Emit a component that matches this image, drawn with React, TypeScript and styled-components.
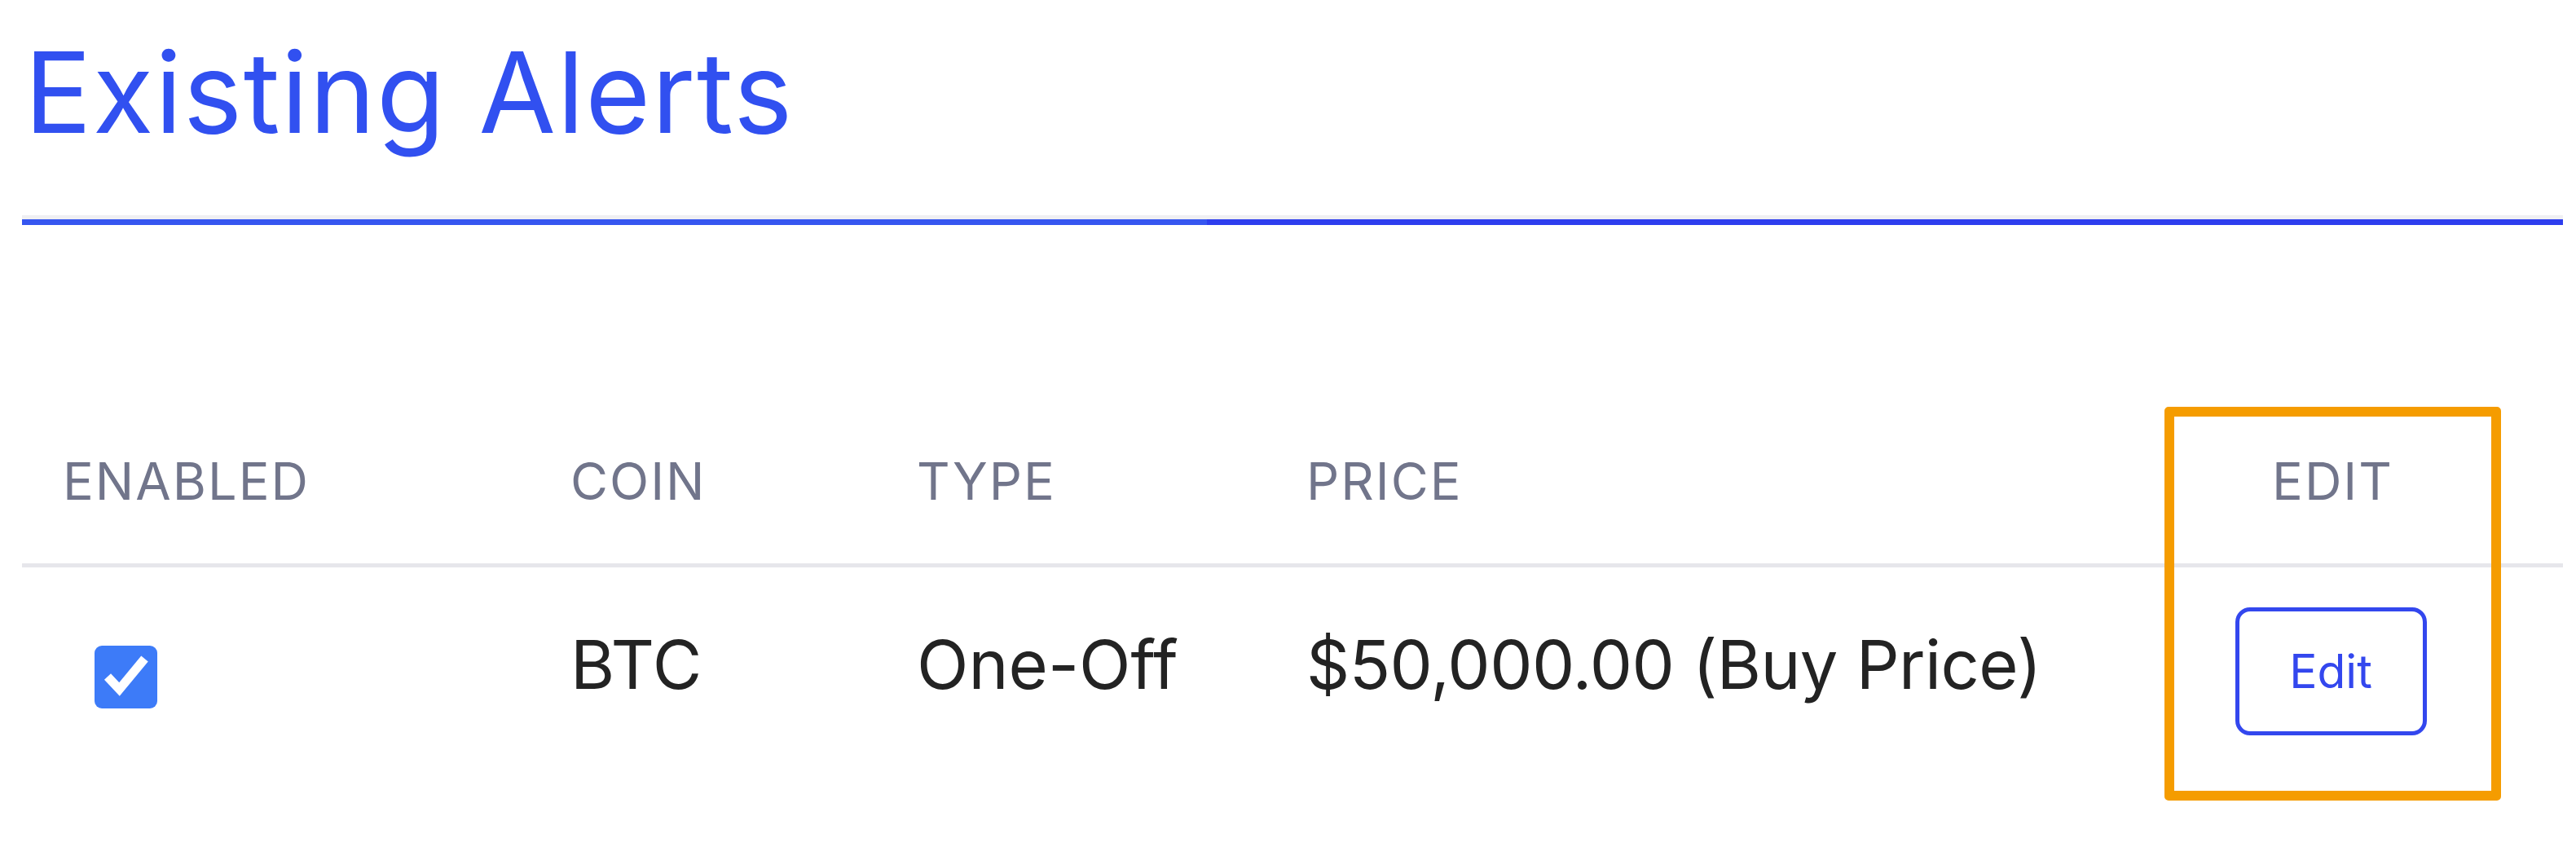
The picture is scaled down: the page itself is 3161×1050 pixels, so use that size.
import styled, { createGlobalStyle } from "styled-components";

const GlobalStyle = createGlobalStyle`
  html, body {
    margin: 0;
    padding: 0;
    background: #ffffff;
  }
  body {
    font-family: Inter, "Noto Sans", "Liberation Sans", sans-serif;
  }
  * {
    box-sizing: border-box;
  }
`;

const Page = styled.main`
  width: 3161px;
  height: 1050px;
  padding: 31px 16px 0 27px;
  overflow: hidden;
`;

const Title = styled.h1`
  margin: 0 0 0 3px;
  font-size: 137px;
  line-height: 164px;
  font-weight: 400;
  color: #3150f0;
  letter-spacing: 1.5px;
`;

const Divider = styled.div`
  margin-top: 69px;
  height: 12px;
  border-top: 5px solid #efeff2;
  background: linear-gradient(to right, #3656f0 0 1454px, #2e3eee 1454px);
`;

const Table = styled.section`
  position: relative;
  margin-top: 276px;
`;

const Row = styled.div<{ header?: boolean }>`
  display: grid;
  grid-template-columns: 673px 425px 478px 1053px 413px 1fr;
  align-items: center;
  padding: ${(p) => (p.header ? "0 0 63px" : "49px 0 0")};
  border-bottom: ${(p) => (p.header ? "5px solid #e6e6eb" : "none")};
`;

const HeadCell = styled.div<{ center?: boolean; inset?: number }>`
  font-size: 63px;
  line-height: 76px;
  letter-spacing: 2px;
  color: #71758b;
  text-transform: uppercase;
  padding-left: ${(p) => p.inset ?? 0}px;
  text-align: ${(p) => (p.center ? "center" : "left")};
`;

const Cell = styled.div<{ tight?: boolean }>`
  font-size: 83px;
  line-height: 100px;
  color: #232323;
  padding-bottom: 17px;
  white-space: nowrap;
  letter-spacing: ${(p) => (p.tight ? "-0.6px" : "0")};
`;

const CheckCell = styled.div`
  padding-left: 89px;
  margin-top: 13px;
  display: flex;
`;

const CheckBox = styled.span`
  display: inline-flex;
  width: 77px;
  height: 77px;
  border-radius: 9px;
  background: #3d7bf8;
  align-items: center;
  justify-content: center;
`;

const EditCell = styled.div`
  display: flex;
  justify-content: center;
`;

const EditButton = styled.button`
  width: 235px;
  height: 157px;
  margin-left: -5px;
  border: 5px solid #3347ee;
  border-radius: 18px;
  background: #ffffff;
  color: #3347ee;
  font-family: Inter, "Noto Sans", sans-serif;
  font-size: 57px;
  line-height: 1;
  cursor: pointer;
`;

const Highlight = styled.div`
  position: absolute;
  left: 2629px;
  top: -53px;
  width: 413px;
  height: 483px;
  border: 12px solid #f59c00;
  border-radius: 5px;
  pointer-events: none;
`;

function Check() {
  return (
    <svg width="77" height="77" viewBox="0 0 77 77" fill="none">
      <path
        d="M16 38 L30.5 53.5 L61.5 16"
        stroke="#ffffff"
        strokeWidth="11"
        strokeLinecap="butt"
        strokeLinejoin="miter"
      />
    </svg>
  );
}

const alerts = [
  { id: 1, enabled: true, coin: "BTC", type: "One-Off", price: "$50,000.00 (Buy Price)" },
];

export default function App() {
  return (
    <>
      <GlobalStyle />
      <Page>
        <Title>Existing Alerts</Title>
        <Divider />
        <Table>
          <Row header>
            <HeadCell inset={50}>Enabled</HeadCell>
            <HeadCell>Coin</HeadCell>
            <HeadCell>Type</HeadCell>
            <HeadCell>Price</HeadCell>
            <HeadCell center>Edit</HeadCell>
            <div />
          </Row>
          {alerts.map((alert) => (
            <Row key={alert.id}>
              <CheckCell>
                <CheckBox role="checkbox" aria-checked={alert.enabled}>
                  {alert.enabled && <Check />}
                </CheckBox>
              </CheckCell>
              <Cell>{alert.coin}</Cell>
              <Cell>{alert.type}</Cell>
              <Cell tight>{alert.price}</Cell>
              <EditCell>
                <EditButton type="button">Edit</EditButton>
              </EditCell>
              <div />
            </Row>
          ))}
          <Highlight />
        </Table>
      </Page>
    </>
  );
}
